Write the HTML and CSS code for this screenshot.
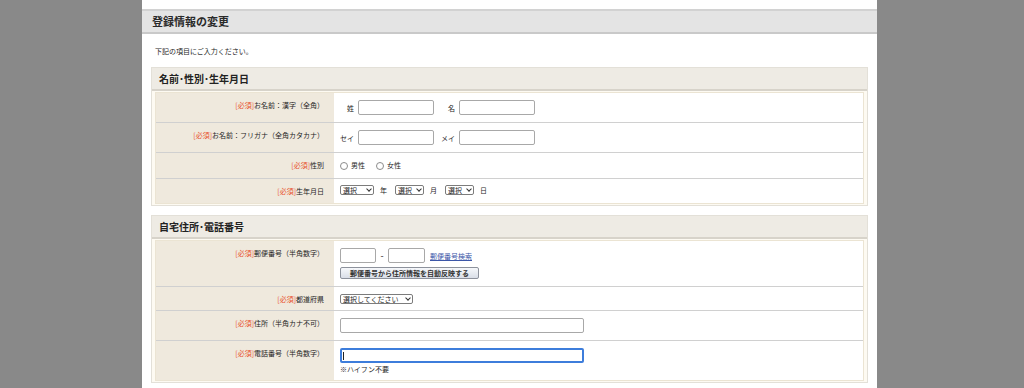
FILE: index.html
```html
<!DOCTYPE html>
<html lang="ja">
<head>
<meta charset="utf-8">
<title>登録情報の変更</title>
<link rel="stylesheet" href="styles.css">
</head>
<body>
<div class="page">
  <h1 class="page-title">登録情報の変更</h1>
  <div class="content">
    <p class="intro">下記の項目にご入力ください。</p>

    <section class="box">
      <h2 class="box-title">名前･性別･生年月日</h2>
      <div class="form-table">
        <div class="row">
          <div class="label"><span class="req">[必須]</span>お名前：漢字（全角）</div>
          <div class="value">
            <span class="pair"><span class="sub">姓</span><input class="txt w76" type="text"></span>
            <span class="pair"><span class="sub">名</span><input class="txt w76" type="text"></span>
          </div>
        </div>
        <div class="row">
          <div class="label"><span class="req">[必須]</span>お名前：フリガナ（全角カタカナ）</div>
          <div class="value">
            <span class="pair"><span class="sub">セイ</span><input class="txt w76" type="text"></span>
            <span class="pair"><span class="sub">メイ</span><input class="txt w76" type="text"></span>
          </div>
        </div>
        <div class="row">
          <div class="label"><span class="req">[必須]</span>性別</div>
          <div class="value radios">
            <label class="radio"><input type="radio" name="sex">男性</label>
            <label class="radio"><input type="radio" name="sex">女性</label>
          </div>
        </div>
        <div class="row">
          <div class="label"><span class="req">[必須]</span>生年月日</div>
          <div class="value dates">
            <span class="sel w34"><select><option>選択</option></select></span><span class="unit">年</span>
            <span class="sel w29"><select><option>選択</option></select></span><span class="unit">月</span>
            <span class="sel w29"><select><option>選択</option></select></span><span class="unit">日</span>
          </div>
        </div>
      </div>
    </section>

    <section class="box">
      <h2 class="box-title">自宅住所･電話番号</h2>
      <div class="form-table">
        <div class="row">
          <div class="label"><span class="req">[必須]</span>郵便番号（半角数字）</div>
          <div class="value stack">
            <div class="zip-line">
              <input class="txt w36" type="text">
              <span class="dash">-</span>
              <input class="txt w37" type="text">
              <a class="link" href="#">郵便番号検索</a>
            </div>
            <button class="btn" type="button">郵便番号から住所情報を自動反映する</button>
          </div>
        </div>
        <div class="row">
          <div class="label"><span class="req">[必須]</span>都道府県</div>
          <div class="value pref">
            <span class="sel w73"><select><option>選択してください</option></select></span>
          </div>
        </div>
        <div class="row">
          <div class="label"><span class="req">[必須]</span>住所（半角カナ不可）</div>
          <div class="value">
            <input class="txt w244" type="text">
          </div>
        </div>
        <div class="row">
          <div class="label"><span class="req">[必須]</span>電話番号（半角数字）</div>
          <div class="value stack tight">
            <span class="focus-wrap"><input class="txt w244 focused" type="text"></span>
            <span class="note">※ハイフン不要</span>
          </div>
        </div>
      </div>
    </section>
  </div>
</div>
</body>
</html>
```
FILE: styles.css
```css
* { box-sizing: border-box; }

body {
  margin: 0;
  background: #898989;
  font-family: "Noto Sans CJK JP", "Noto Sans", sans-serif;
  color: #222;
}

.page {
  width: 735px;
  margin-left: 142px;
  min-height: 388px;
  background: #fff;
  padding-top: 9px;
}

.page-title {
  margin: 0;
  height: 25px;
  line-height: 21px;
  padding-left: 10px;
  font-size: 11px;
  font-weight: bold;
  color: #2a2a2a;
  background: #e4e4e4;
  border-top: 2px solid #d2d2d2;
  border-bottom: 2px solid #c9c9c9;
}

.content {
  padding: 0 9px;
}

.intro {
  margin: 12px 0 11px;
  padding-left: 4px;
  font-size: 7px;
  line-height: 10px;
  color: #1e1e1e;
}

.box {
  border: 1px solid #e3e0d8;
  background: #fdfaf2;
  padding: 0 3px 1px;
  margin-bottom: 9px;
}

.box-title {
  margin: 0 -3px;
  height: 23px;
  line-height: 21px;
  padding-left: 7px;
  font-size: 10px;
  font-weight: bold;
  color: #222;
  background: #eeebe4;
  border-bottom: 2px solid #d7d3ca;
}

.form-table {
  margin-top: 1px;
  border: 1px solid #ebe4d3;
  background: #fff;
}

.row {
  display: flex;
  border-top: 1px solid #d0d0d0;
}
.row:first-child { border-top: none; }

.label {
  flex: 0 0 178px;
  background: #efe9dd;
  text-align: right;
  padding: 8px 10px 0 0;
  font-size: 7px;
  line-height: 9px;
  color: #1e1e1e;
}

.req { color: #e8502a; }

.value {
  flex: 1;
  display: flex;
  align-items: center;
  gap: 7px;
  padding: 7px 6px;
  font-size: 7px;
  color: #1e1e1e;
}

.pair {
  display: inline-flex;
  align-items: center;
  gap: 4px;
}

.sub {
  width: 14px;
  text-align: right;
  line-height: 10px;
}

.txt {
  height: 15px;
  padding: 0 2px;
  border: 1px solid #a8a8a8;
  border-radius: 2px;
  background: #fff;
  font-size: 7px;
  font-family: inherit;
}
.w76 { width: 76px; }
.w36 { width: 36px; }
.w37 { width: 37px; }
.w244 { width: 244px; }

.txt.focused {
  border: 2px solid #3d7ddb;
}

.focus-wrap {
  position: relative;
  display: inline-block;
  height: 15px;
}
.focus-wrap::after {
  content: "";
  position: absolute;
  left: 3px;
  top: 4px;
  width: 1px;
  height: 8px;
  background: #222;
}

.radios { gap: 11px; }

.radio {
  display: inline-flex;
  align-items: center;
  gap: 3px;
  height: 11px;
  line-height: 11px;
}
.radio input {
  appearance: none;
  -webkit-appearance: none;
  margin: 0;
  width: 8px;
  height: 8px;
  border: 1px solid #8c8c8c;
  border-radius: 50%;
  background: #fff;
}

.dates { gap: 0; padding: 6px 6px 8px; }
.unit {
  margin: 0 8px 0 6px;
  line-height: 10px;
}

.sel {
  position: relative;
  display: inline-block;
  height: 10px;
}
.sel select {
  appearance: none;
  -webkit-appearance: none;
  width: 100%;
  height: 10px;
  margin: 0;
  padding: 0 8px 0 2px;
  border: 1px solid #7c7c7c;
  border-radius: 2px;
  background: #fff;
  font-family: inherit;
  font-size: 7px;
  line-height: 8px;
  color: #1e1e1e;
}
.sel::after {
  content: "";
  position: absolute;
  right: 3px;
  top: 2px;
  width: 3px;
  height: 3px;
  border-right: 1px solid #333;
  border-bottom: 1px solid #333;
  transform: rotate(45deg);
  pointer-events: none;
}
.w34 { width: 34px; }
.w29 { width: 29px; }
.w73 { width: 73px; }

.pref { padding: 7px 6px 6px; }

.stack {
  flex-direction: column;
  align-items: flex-start;
  gap: 4px;
}
.stack.tight { gap: 1px; padding-bottom: 6px; }

.zip-line {
  display: flex;
  align-items: center;
}
.dash {
  width: 12px;
  text-align: center;
  font-size: 9px;
}
.link {
  margin-left: 5px;
  color: #3b56a8;
  text-decoration: underline;
  font-size: 7px;
}

.btn {
  width: 139px;
  height: 12px;
  padding: 0;
  border: 1px solid #8d929c;
  border-radius: 2px;
  background: linear-gradient(#f6f8fb, #d9dee7);
  font-family: inherit;
  font-size: 7px;
  font-weight: bold;
  line-height: 10px;
  color: #333;
}

.note {
  line-height: 10px;
  color: #1e1e1e;
}
```
